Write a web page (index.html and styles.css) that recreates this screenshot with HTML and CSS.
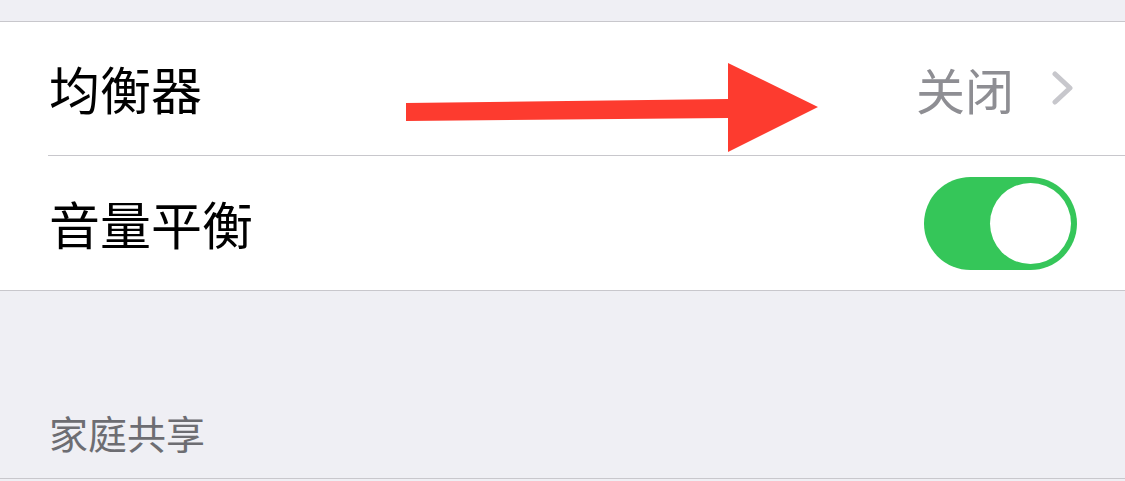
FILE: index.html
```html
<!DOCTYPE html>
<html lang="zh-CN">
<head>
  <meta charset="UTF-8">
  <title>音乐设置</title>
  <link rel="stylesheet" href="styles.css">
</head>
<body>
  <div class="page">
    <div class="top-gap"></div>
    <div class="group">
      <div class="row">
        <div class="row-inner">
          <span class="label">均衡器</span>
          <span class="detail">
            <span class="value">关闭</span>
            <svg class="chevron" width="22" height="34" viewBox="0 0 22 34">
              <path d="M3 3 L18 17 L3 31" fill="none" stroke="#c7c7cc" stroke-width="5" stroke-linecap="round" stroke-linejoin="round"/>
            </svg>
          </span>
        </div>
      </div>
      <div class="row row-last">
        <div class="row-inner">
          <span class="label">音量平衡</span>
          <span class="switch on"><span class="knob"></span></span>
        </div>
      </div>
    </div>
    <div class="section-header">家庭共享</div>

    <!-- 标注箭头 -->
    <svg class="annotation" width="1125" height="481" viewBox="0 0 1125 481">
      <polygon points="406,103 728,99 728,63 818,107 728,152 728,118 406,121" fill="#fd3b2f"/>
    </svg>
  </div>
</body>
</html>
```

FILE: styles.css
```css
body {
  margin: 0;
  padding: 0;
  background: #efeff4;
  font-family: "Noto Sans CJK SC", "Noto Sans", sans-serif;
}
.page {
  position: relative;
  width: 1125px;
  height: 481px;
  overflow: hidden;
}
.top-gap {
  height: 21px;
}
.group {
  background: white;
  border-top: 1px solid #c8c7cc;
  border-bottom: 1px solid #c8c7cc;
}
.row {
  padding-left: 48px;
}
.row-inner {
  height: 133px;
  padding-right: 48px;
  display: flex;
  align-items: center;
  justify-content: space-between;
  border-bottom: 1px solid #c8c7cc;
}
.row-last .row-inner {
  height: 134px;
  border-bottom: none;
}
.label {
  font-size: 51px;
  line-height: 1;
  color: #000;
  padding-left: 1px;
}
.detail {
  display: flex;
  align-items: center;
}
.value {
  font-size: 49px;
  line-height: 1;
  color: #8e8e93;
  margin-right: 38px;
}
.chevron {
  display: block;
  margin-top: -2px;
  margin-right: 3px;
}
.switch {
  position: relative;
  width: 153px;
  height: 93px;
  border-radius: 47px;
  background: #e5e5ea;
}
.switch.on {
  background: #35c659;
}
.knob {
  position: absolute;
  top: 6px;
  right: 6px;
  width: 81px;
  height: 81px;
  border-radius: 50%;
  background: white;
}
.section-header {
  padding: 122px 0 26px 49px;
  font-size: 39px;
  line-height: 1;
  color: #6d6d72;
  border-bottom: 1px solid #c8c7cc;
}
.annotation {
  position: absolute;
  top: 0;
  left: 0;
  pointer-events: none;
}
```
